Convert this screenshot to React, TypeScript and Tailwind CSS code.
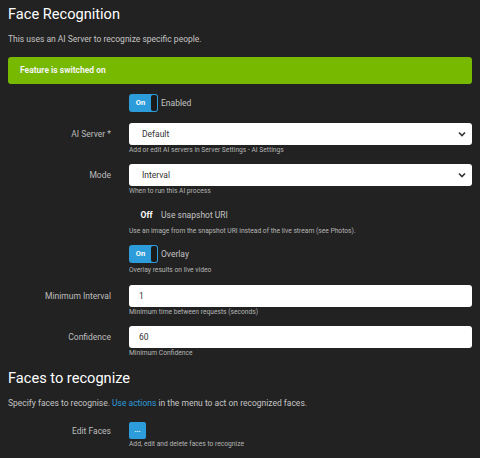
import React from "react";

function Toggle({ on }: { on: boolean }) {
  if (on) {
    return (
      <div className="flex h-[18px] w-[29px] items-stretch rounded-[3px] bg-[#2d9cdb] p-[1px]">
        <div className="flex flex-1 items-center justify-center text-[7.5px] font-bold text-white">On</div>
        <div className="w-[6px] rounded-[2px] bg-[#1b1b1b]" />
      </div>
    );
  }
  return (
    <div className="flex h-[18px] w-[29px] items-stretch rounded-[3px] bg-[#222222] p-[1px]">
      <div className="w-[6px] rounded-[2px] bg-[#222222]" />
      <div className="flex flex-1 items-center justify-center text-[8.5px] font-bold text-white">Off</div>
    </div>
  );
}

function Chevron() {
  return (
    <svg width="8" height="6" viewBox="0 0 8 6" className="text-[#333]">
      <path d="M1 1.5 L4 4.5 L7 1.5" fill="none" stroke="currentColor" strokeWidth="1.6" />
    </svg>
  );
}

function Help({ children }: { children: React.ReactNode }) {
  return <div className="h-[10px] text-[6.7px] leading-[10px] text-[#b5b5b5]">{children}</div>;
}

function Row({ label, children, className }: { label?: string; children: React.ReactNode; className?: string }) {
  return (
    <div className={"grid grid-cols-[121px_1fr] " + (className ?? "")}>
      <div className="flex h-[22px] items-center justify-end pr-[18px] text-[8.5px] text-[#bdbdbd]">{label}</div>
      <div>{children}</div>
    </div>
  );
}

function SwitchRow({ on, text, help, className }: { on: boolean; text: string; help?: string; className?: string }) {
  return (
    <div className={"grid grid-cols-[121px_1fr] " + (className ?? "")}>
      <div />
      <div>
        <div className="flex items-center gap-[3px]">
          <Toggle on={on} />
          <span className="text-[8.5px] text-[#c4c4c4]">{text}</span>
        </div>
        {help && <div className="mt-[2px]"><Help>{help}</Help></div>}
      </div>
    </div>
  );
}

export default function App() {
  return (
    <div className="min-h-[458px] w-[480px] bg-[#222222] px-2 pt-[3px] font-['Roboto',sans-serif]">
      <h1 className="text-[14.6px] leading-[22px] text-white">Face Recognition</h1>
      <p className="mt-[8px] text-[8.5px] leading-[12px] text-[#c4c4c4]">This uses an AI Server to recognize specific people.</p>

      <div className="mt-[12px] flex h-[27px] items-center rounded-[3px] bg-[#76b900] px-3 text-[8.5px] font-bold text-[#f4f4f4]">
        Feature is switched on
      </div>

      <SwitchRow on text="Enabled" className="mt-[10px]" />

      <Row label="AI Server *" className="mt-[11px]">
        <div className="flex h-[22px] items-center justify-between rounded-[3px] bg-white pl-[13px] pr-[6px] text-[8.5px] text-[#333]">
          <span>Default</span>
          <Chevron />
        </div>
        <Help>Add or edit AI servers in Server Settings - AI Settings</Help>
      </Row>

      <Row label="Mode" className="mt-[9px]">
        <div className="flex h-[22px] items-center justify-between rounded-[3px] bg-white pl-[13px] pr-[6px] text-[8.5px] text-[#333]">
          <span>Interval</span>
          <Chevron />
        </div>
        <Help>When to run this AI process</Help>
      </Row>

      <SwitchRow
        on={false}
        text="Use snapshot URI"
        help="Use an image from the snapshot URI instead of the live stream (see Photos)."
        className="mt-[10px]"
      />

      <SwitchRow on text="Overlay" help="Overlay results on live video" className="mt-[9px]" />

      <Row label="Minimum Interval" className="mt-[10px]">
        <div className="flex h-[22px] items-center rounded-[3px] bg-white pl-[10px] text-[8.5px] text-[#333]">1</div>
        <Help>Minimum time between requests (seconds)</Help>
      </Row>

      <Row label="Confidence" className="mt-[9px]">
        <div className="flex h-[22px] items-center rounded-[3px] bg-white pl-[10px] text-[8.5px] text-[#333]">60</div>
        <Help>Minimum Confidence</Help>
      </Row>

      <h2 className="mt-[9px] text-[14.6px] leading-[22px] text-white">Faces to recognize</h2>
      <p className="mt-[8px] text-[8.5px] leading-[12px] text-[#c4c4c4]">
        Specify faces to recognise. <span className="text-[#2d9cdb]">Use actions</span> in the menu to act on recognized faces.
      </p>

      <div className="mt-[11px] grid grid-cols-[121px_1fr]">
        <div className="flex h-[22px] items-center justify-end pr-[18px] text-[8.5px] text-[#bdbdbd]">Edit Faces</div>
        <div className="pt-[2px]">
          <div className="flex h-[17px] w-[17px] items-center justify-center rounded-[2px] bg-[#2d9cdb] text-[7px] font-bold leading-none text-white">...</div>
          <Help>Add, edit and delete faces to recognize</Help>
        </div>
      </div>
    </div>
  );
}
